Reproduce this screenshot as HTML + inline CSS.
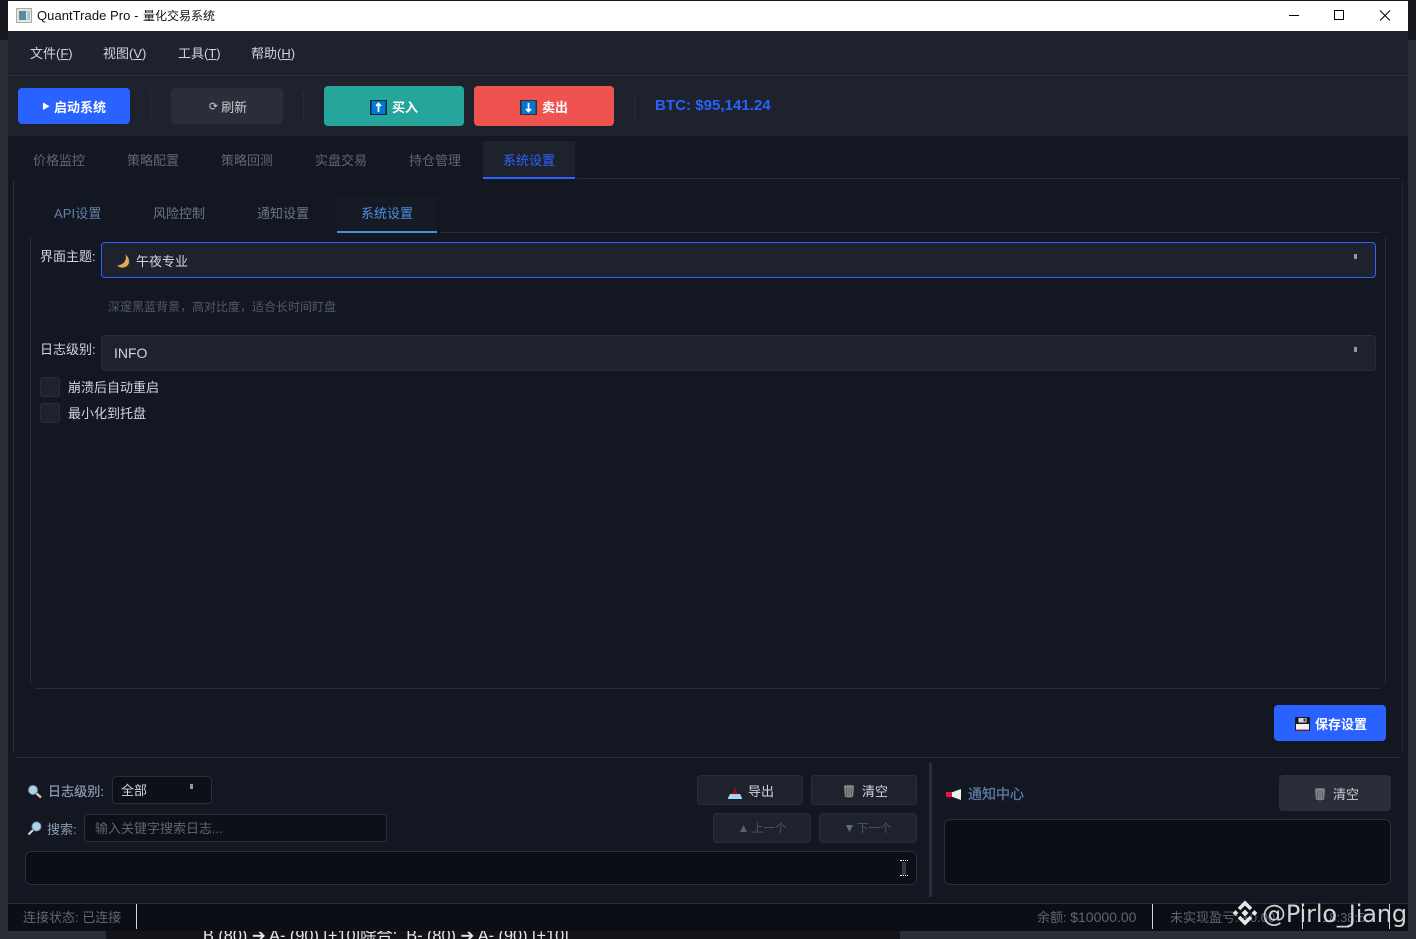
<!DOCTYPE html>
<html lang="zh"><head><meta charset="utf-8"><title>QuantTrade Pro</title>
<style>
html,body{margin:0;padding:0;width:1416px;height:939px;overflow:hidden;background:#2a2e37}
body{position:relative;font-family:"Liberation Sans","Noto Sans CJK SC",sans-serif;font-size:13px;color:#c9d1d9}
.a,.t{position:absolute;box-sizing:border-box}
.t{white-space:nowrap;line-height:18px;height:18px}
.c{display:flex;align-items:center;justify-content:center;white-space:nowrap}
svg{position:absolute;display:block}
.b{-webkit-text-stroke:.25px currentColor}
</style></head><body>
<div class="a" style="left:0;top:0;width:1416px;height:40px;background:#15171c"></div>
<div class="a" style="left:106px;top:931px;width:794px;height:8px;background:#141418;overflow:hidden"><div class="t" style="left:97px;top:-4px;color:#e8e8e8;font-size:16.3px">B (80) ➔ A- (90) [+10]除合:&nbsp; B- (80) ➔ A- (90) [+10]</div></div>
<div class="a" style="left:8px;top:1px;width:1400px;height:30px;background:#fff"></div>
<div class="a" style="left:8px;top:31px;width:1400px;height:105px;background:#1e222d"></div>
<div class="a" style="left:8px;top:136px;width:1400px;height:767px;background:#131722"></div>
<div class="a" style="left:8px;top:903px;width:1400px;height:28px;background:#0b0e14;border-top:1px solid #2a2e39"></div>

<svg style="left:16px;top:8px" width="16" height="15" viewBox="0 0 16 15"><rect x=".5" y=".5" width="15" height="14" fill="#dfe6e6" stroke="#a0aeae"/><rect x="3" y="3" width="7" height="9" fill="#5a8aa0"/><rect x="11" y="3" width="3" height="9" fill="#b9c6c6"/></svg>
<div class="t" style="left:37px;top:7px;color:#111;font-size:13px;letter-spacing:.05px">QuantTrade Pro -</div>
<div class="t" style="left:143px;top:7px;color:#111;font-size:12px">量化交易系统</div>
<svg style="left:1289px;top:9px" width="110" height="14" viewBox="0 0 110 14"><path d="M0 6.500H10" stroke="#000" fill="none"/><rect x="45.500" y="1.500" width="9" height="9" stroke="#000" fill="none"/><path d="M91 1.500L101 11.500M101 1.500L91 11.500" stroke="#000" fill="none"/></svg>

<div class="t" style="left:30px;top:45px;color:#d1d4dc">文件(<u>F</u>)</div>
<div class="t" style="left:103px;top:45px;color:#d1d4dc">视图(<u>V</u>)</div>
<div class="t" style="left:178px;top:45px;color:#d1d4dc">工具(<u>T</u>)</div>
<div class="t" style="left:251px;top:45px;color:#d1d4dc">帮助(<u>H</u>)</div>
<div class="a" style="left:8px;top:75px;width:1400px;height:1px;background:#2a2e39"></div>

<div class="a c" style="left:18px;top:88px;width:112px;height:36px;background:#2962ff;border-radius:4px;color:#fff;font-weight:bold"><span style="font-size:8px;margin-right:4px">▶</span>启动系统</div>
<div class="a" style="left:150px;top:92px;width:1px;height:28px;background:#2a2e39"></div>
<div class="a c" style="left:171px;top:88px;width:112px;height:36px;background:#2a2e39;border-radius:4px;color:#c9ccd3;padding-left:2px"><span style="font-size:11px;margin-right:3px">⟳</span>刷新</div>
<div class="a" style="left:303px;top:92px;width:1px;height:28px;background:#2a2e39"></div>
<div class="a" style="left:324px;top:86px;width:140px;height:40px;background:#26a69a;border-radius:4px"></div>
<svg style="left:370px;top:100px" width="17" height="15" viewBox="0 0 17 15"><rect width="17" height="15" fill="#10243a"/><rect x="1.500" y="1" width="14" height="13" fill="#0078d4"/><path d="M8.500 3.500V12M6 6L8.500 3.500L11 6" stroke="#fff" stroke-width="1.700" fill="none"/></svg>
<div class="t" style="left:392px;top:99px;color:#fff;font-weight:bold">买入</div>
<div class="a" style="left:474px;top:86px;width:140px;height:40px;background:#ef5350;border-radius:4px"></div>
<svg style="left:520px;top:100px" width="17" height="15" viewBox="0 0 17 15"><rect width="17" height="15" fill="#3a2a2a"/><rect x="1.500" y="1" width="14" height="13" fill="#0078d4"/><path d="M8.500 3V11.500M6 9L8.500 11.500L11 9" stroke="#fff" stroke-width="1.700" fill="none"/></svg>
<div class="t" style="left:542px;top:99px;color:#fff;font-weight:bold">卖出</div>
<div class="a" style="left:634px;top:92px;width:1px;height:28px;background:#2a2e39"></div>
<div class="t" style="left:655px;top:97px;color:#2962ff;font-size:15px;font-weight:bold;letter-spacing:.05px">BTC: $95,141.24</div>

<div class="t" style="left:33px;top:152px;color:#5f6672">价格监控</div>
<div class="t" style="left:127px;top:152px;color:#5f6672">策略配置</div>
<div class="t" style="left:221px;top:152px;color:#5f6672">策略回测</div>
<div class="t" style="left:315px;top:152px;color:#5f6672">实盘交易</div>
<div class="t" style="left:409px;top:152px;color:#5f6672">持仓管理</div>
<div class="a" style="left:483px;top:141px;width:92px;height:38px;background:#1e222d;border-bottom:2px solid #2962ff"></div>
<div class="t" style="left:503px;top:152px;color:#2962ff">系统设置</div>
<div class="a" style="left:577px;top:178px;width:823px;height:1px;background:#2a2e39"></div>

<div class="a" style="left:13px;top:181px;width:1px;height:572px;background:#2a2e39"></div>
<div class="a" style="left:16px;top:757px;width:1384px;height:1px;background:#2a2e39"></div>
<div class="a" style="left:1402px;top:181px;width:1px;height:572px;background:#242832"></div>

<div class="t" style="left:54px;top:205px;color:#5d7ea8;letter-spacing:.1px">API设置</div>
<div class="t" style="left:153px;top:205px;color:#6d7683">风险控制</div>
<div class="t" style="left:257px;top:205px;color:#6d7683">通知设置</div>
<div class="a" style="left:337px;top:196px;width:100px;height:37px;background:#161a24;border-bottom:2px solid #4a90e2"></div>
<div class="t" style="left:361px;top:205px;color:#4a90e2">系统设置</div>
<div class="a" style="left:441px;top:232px;width:939px;height:1px;background:#2a2e39"></div>
<div class="a" style="left:30px;top:237px;width:1px;height:447px;background:#2a2e39"></div>
<div class="a" style="left:1385px;top:237px;width:1px;height:447px;background:#2a2e39"></div>
<div class="a" style="left:35px;top:688px;width:1345px;height:1px;background:#2a2e39"></div>

<div class="t" style="left:40px;top:248px;color:#d1d4dc">界面主题:</div>
<div class="a" style="left:101px;top:242px;width:1275px;height:36px;background:#1e222d;border:1px solid #2962ff;border-radius:4px"></div>
<svg style="left:115px;top:253px" width="16" height="16" viewBox="0 0 16 16"><path d="M10 1C12 6 10 11 2 12.500C5 16 12 15.500 14 10.500C15 6.500 13 3 10 1Z" fill="#e8a95c" stroke="#4a3a28" stroke-width=".6"/></svg>
<div class="t" style="left:136px;top:253px;color:#d1d4dc">午夜专业</div>
<div class="a" style="left:1354px;top:254px;width:3px;height:5px;background:#9598a1"></div>
<div class="t" style="left:108px;top:298px;color:#525a68;font-size:12px">深邃黑蓝背景，高对比度，适合长时间盯盘</div>
<div class="t" style="left:40px;top:341px;color:#d1d4dc">日志级别:</div>
<div class="a" style="left:101px;top:335px;width:1275px;height:36px;background:#1e222d;border:1px solid #2a2e39;border-radius:4px"></div>
<div class="t" style="left:114px;top:344px;color:#d1d4dc;font-size:14px">INFO</div>
<div class="a" style="left:1354px;top:347px;width:3px;height:5px;background:#9598a1"></div>
<div class="a" style="left:40px;top:377px;width:20px;height:20px;background:#1e222d;border:1px solid #2a2e39;border-radius:3px"></div>
<div class="t" style="left:68px;top:379px;color:#d1d4dc">崩溃后自动重启</div>
<div class="a" style="left:40px;top:403px;width:20px;height:20px;background:#1e222d;border:1px solid #2a2e39;border-radius:3px"></div>
<div class="t" style="left:68px;top:405px;color:#d1d4dc">最小化到托盘</div>

<div class="a" style="left:1274px;top:705px;width:112px;height:36px;background:#2962ff;border-radius:4px"></div>
<svg style="left:1295px;top:717px" width="15" height="14" viewBox="0 0 15 14"><rect width="15" height="14" rx="1" fill="#1a1a22"/><rect x="1" y="7" width="13" height="5.500" fill="#f0f0f0"/><rect x="1" y="12.500" width="13" height="1" fill="#c8202c"/><rect x="3.500" y="1" width="8" height="4.500" fill="#d4d8dc"/><rect x="8.500" y="1.500" width="2" height="3" fill="#333"/></svg>
<div class="t" style="left:1315px;top:716px;color:#fff;font-weight:bold">保存设置</div>

<svg style="left:27px;top:784px" width="15" height="15" viewBox="0 0 15 15"><circle cx="6" cy="6" r="4.500" fill="#a8d4ef" stroke="#7c8c98"/><path d="M9.500 9.500L14 13.500" stroke="#d9d0bd" stroke-width="2.200"/></svg>
<div class="t b" style="left:48px;top:783px;color:#8b9bb0;letter-spacing:.1px">日志级别:</div>
<div class="a" style="left:112px;top:776px;width:100px;height:28px;background:#0d1017;border:1px solid #2a2e39;border-radius:4px"></div>
<div class="t" style="left:121px;top:782px;color:#d1d4dc">全部</div>
<div class="a" style="left:190px;top:784px;width:3px;height:5px;background:#9598a1"></div>
<svg style="left:27px;top:821px" width="15" height="15" viewBox="0 0 15 15"><circle cx="9.500" cy="5.500" r="4.500" fill="#a8d4ef" stroke="#7c8c98"/><path d="M6 9L1.500 13.500" stroke="#d9d0bd" stroke-width="2.200"/></svg>
<div class="t" style="left:47px;top:821px;color:#8b9bb0">搜索:</div>
<div class="a" style="left:84px;top:814px;width:303px;height:28px;background:#0d1017;border:1px solid #2a2e39;border-radius:4px"></div>
<div class="t" style="left:95px;top:820px;color:#5d6470">输入关键字搜索日志...</div>

<div class="a" style="left:697px;top:775px;width:106px;height:30px;background:#1e222d;border:1px solid #2a2e39;border-radius:4px"></div>
<svg style="left:728px;top:787px" width="14" height="12" viewBox="0 0 14 12"><path d="M0 11L2 7H12L14 11V12H0Z" fill="#a8d8f0"/><path d="M7 1V6M4.500 6H9.500" stroke="#8a1018" stroke-width="2.200"/></svg>
<div class="t" style="left:748px;top:783px;color:#d1d4dc">导出</div>
<div class="a" style="left:811px;top:775px;width:106px;height:30px;background:#1e222d;border:1px solid #2a2e39;border-radius:4px"></div>
<svg style="left:843px;top:784px" width="12" height="14" viewBox="0 0 12 14"><path d="M.5 1.500C3 .5 9 .5 11.500 1.500L10.500 13C8.500 14 3.500 14 1.500 13Z" fill="#7f8585" stroke="#24282c" stroke-width=".8"/><path d="M3.500 4V12M6 4V12M8.500 4V12" stroke="#5d6363"/></svg>
<div class="t" style="left:862px;top:783px;color:#d1d4dc">清空</div>
<div class="a" style="left:713px;top:813px;width:98px;height:30px;background:#1e222d;border:1px solid #2a2e39;border-radius:4px"></div>
<svg style="left:739px;top:824px" width="9" height="9" viewBox="0 0 9 9"><path d="M4.500 1L8 8H1Z" fill="#5a606a"/></svg>
<div class="t" style="left:752px;top:820px;color:#50555f;font-size:11.5px">上一个</div>
<div class="a" style="left:819px;top:813px;width:98px;height:30px;background:#1e222d;border:1px solid #2a2e39;border-radius:4px"></div>
<svg style="left:845px;top:824px" width="9" height="9" viewBox="0 0 9 9"><path d="M1 1H8L4.500 8Z" fill="#5a6c86"/></svg>
<div class="t" style="left:857px;top:820px;color:#50555f;font-size:11.5px">下一个</div>
<div class="a" style="left:25px;top:851px;width:892px;height:34px;background:#0b0e14;border:1px solid #2a2e39;border-radius:6px"></div>
<div class="a" style="left:900px;top:860px;width:8px;height:16px;border-top:1px dotted #fff;border-bottom:1px dotted #fff"><div class="a" style="left:2px;top:1px;width:4px;height:13px;background:#363a45"></div></div>

<div class="a" style="left:929px;top:763px;width:3px;height:134px;background:#2a2e39"></div>
<svg style="left:946px;top:789px" width="16" height="11" viewBox="0 0 16 11"><path d="M4 4L15 0V11L4 7Z" fill="#eee"/><rect x="0" y="3" width="6" height="5" fill="#e8173a"/><rect x="2" y="8" width="3" height="2" fill="#222"/></svg>
<div class="t b" style="left:968px;top:785px;color:#5d7ea8;font-size:14px">通知中心</div>
<div class="a" style="left:1279px;top:775px;width:112px;height:36px;background:#2a2e39;border-radius:4px"></div>
<svg style="left:1314px;top:787px" width="12" height="14" viewBox="0 0 12 14"><path d="M.5 1.500C3 .5 9 .5 11.500 1.500L10.500 13C8.500 14 3.500 14 1.500 13Z" fill="#7f8585" stroke="#24282c" stroke-width=".8"/><path d="M3.500 4V12M6 4V12M8.500 4V12" stroke="#5d6363"/></svg>
<div class="t" style="left:1333px;top:786px;color:#c9ccd3">清空</div>
<div class="a" style="left:944px;top:819px;width:447px;height:66px;background:#0b0e14;border:1px solid #2a2e39;border-radius:6px"></div>

<div class="t" style="left:23px;top:909px;color:#5f6672">连接状态: 已连接</div>
<div class="a" style="left:136px;top:904px;width:1px;height:25px;background:#d1d4dc"></div>
<div class="t" style="left:1037px;top:908px;color:#5f6672">余额: <span style="font-size:14px">$10000.00</span></div>
<div class="a" style="left:1152px;top:904px;width:1px;height:25px;background:#d1d4dc"></div>
<div class="t" style="left:1170px;top:909px;color:#5f6672">未实现盈亏: +0.00</div>
<div class="a" style="left:1302px;top:904px;width:1px;height:25px;background:#d1d4dc"></div>
<div class="t" style="left:1322px;top:909px;color:#5f6672">18:38:5</div>
<div class="a" style="left:1389px;top:904px;width:1px;height:25px;background:#d1d4dc"></div>

<svg style="left:1232px;top:899px" width="26" height="28" viewBox="0 0 26 28"><g fill="none" stroke="#e6e8ea" stroke-width="3.600"><path d="M7 10L13 4L19 10"/><path d="M7 18L13 24L19 18"/></g><rect x="10.500" y="11.500" width="5" height="5" transform="rotate(45 13 14)" fill="#e6e8ea"/><rect x="1.500" y="12" width="4" height="4" transform="rotate(45 3.500 14)" fill="#e6e8ea"/><rect x="20.500" y="12" width="4" height="4" transform="rotate(45 22.500 14)" fill="#e6e8ea"/></svg>
<div class="t" style="left:1262px;top:900px;height:28px;line-height:28px;color:#dfe2e5;font-size:24px;opacity:.92;font-family:'DejaVu Sans','Liberation Sans',sans-serif;letter-spacing:-.15px">@Pirlo_Jiang</div>
</body></html>
